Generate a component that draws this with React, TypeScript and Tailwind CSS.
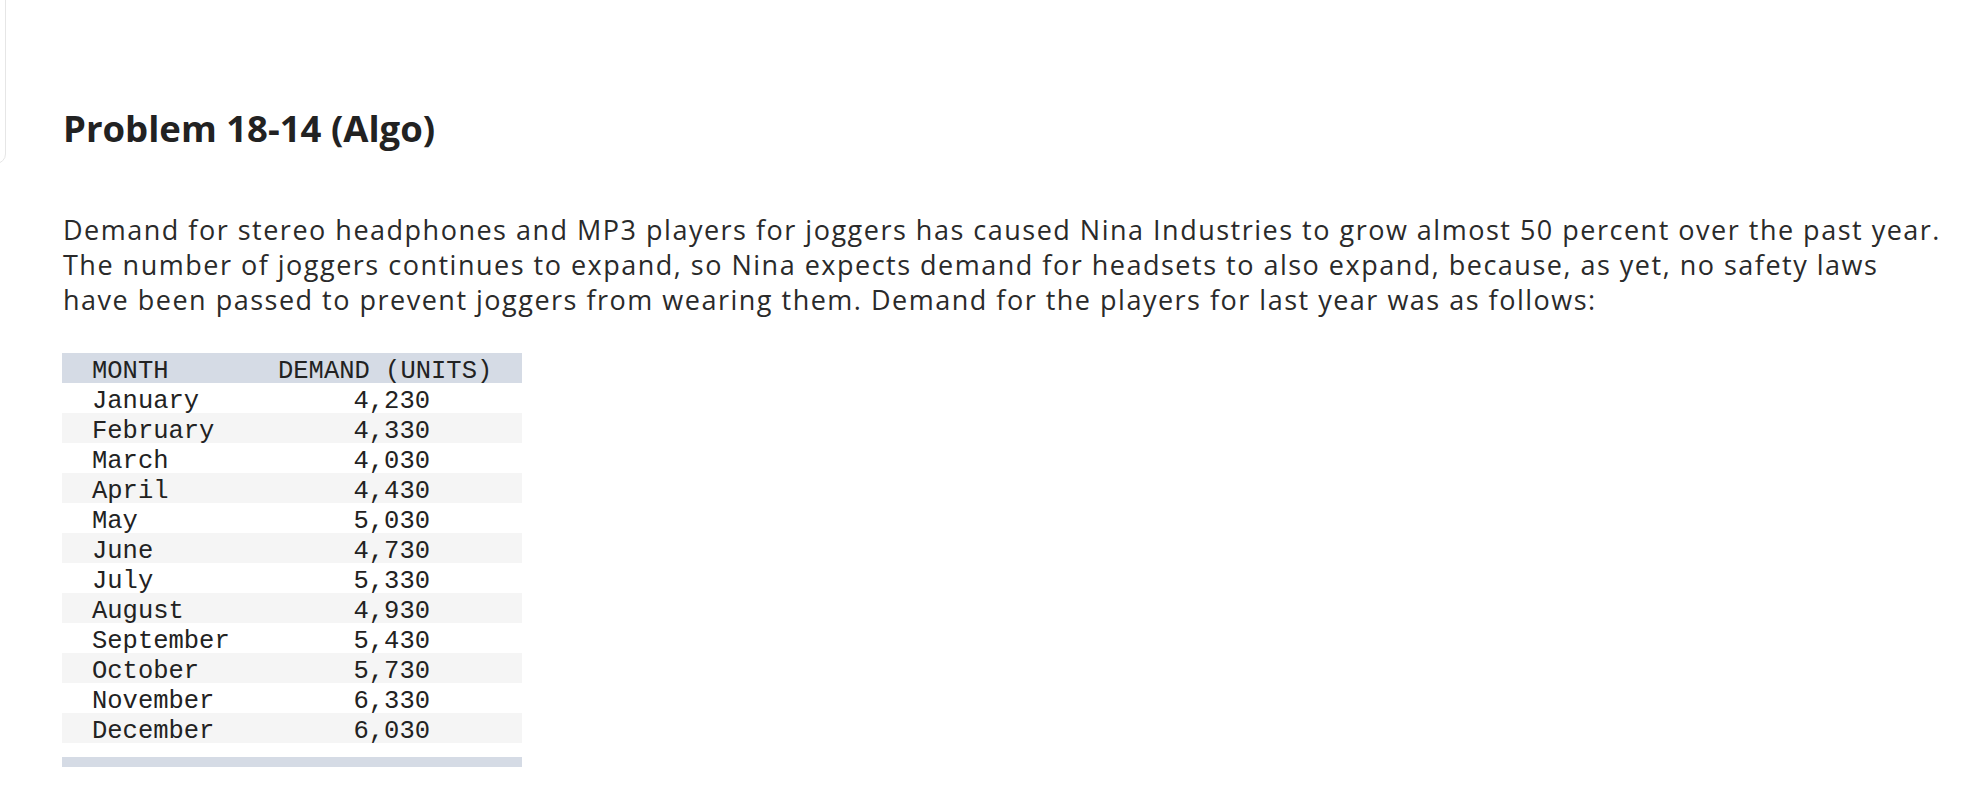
import React from "react";

const rows: [string, string][] = [
  ["January", "4,230"],
  ["February", "4,330"],
  ["March", "4,030"],
  ["April", "4,430"],
  ["May", "5,030"],
  ["June", "4,730"],
  ["July", "5,330"],
  ["August", "4,930"],
  ["September", "5,430"],
  ["October", "5,730"],
  ["November", "6,330"],
  ["December", "6,030"],
];

export default function App() {
  return (
    <div className="relative min-h-[810px] w-full overflow-hidden bg-white">
      <div className="absolute left-[-300px] top-[-20px] h-[184px] w-[306px] rounded-[10px] border border-[#e6e6e6]" />
      <div className="pl-[63px] pt-[109px]">
        <h1
          className="m-0 text-[36.5px] font-bold leading-[38px] text-[#222222] whitespace-nowrap"
          style={{ fontFamily: '"Open Sans", sans-serif' }}
        >
          Problem 18-14 (Algo)
        </h1>
        <p
          className="mt-[65px] text-[27px] leading-[35px] tracking-[1.5px] text-[#2a2a2a] whitespace-nowrap"
          style={{ fontFamily: '"Open Sans", sans-serif' }}
        >
          Demand for stereo headphones and MP3 players for joggers has caused Nina Industries to grow almost 50 percent over the past year.
          <br />
          The number of joggers continues to expand, so Nina expects demand for headsets to also expand, because, as yet, no safety laws
          <br />
          have been passed to prevent joggers from wearing them. Demand for the players for last year was as follows:
        </p>
        <div
          className="mt-[36px] ml-[-1px] w-[460px] text-[25.5px] text-[#222222]"
          style={{ fontFamily: '"Liberation Mono", "Courier New", monospace' }}
        >
          <div className="flex h-[30px] items-center bg-[#d5dbe5] pt-[8px]">
            <div className="w-[216px] pl-[30px] whitespace-pre">MONTH</div>
            <div className="whitespace-pre">DEMAND (UNITS)</div>
          </div>
          {rows.map(([m, v], i) => (
            <div
              key={m}
              className={`flex h-[30px] items-center pt-[8px] ${i % 2 === 1 ? "bg-[#f5f5f5]" : "bg-white"}`}
            >
              <div className="w-[216px] pl-[30px] whitespace-pre">{m}</div>
              <div className="w-[152px] text-right whitespace-pre">{v}</div>
            </div>
          ))}
          <div className="mt-[14px] h-[10px] bg-[#d5dbe5]" />
        </div>
      </div>
    </div>
  );
}
